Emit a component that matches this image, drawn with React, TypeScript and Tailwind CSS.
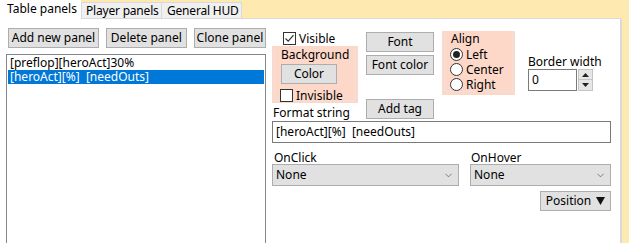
import { ChevronDown } from 'lucide-react';

const font = { fontFamily: '"Noto Sans", "Open Sans", sans-serif' };

function WinButton({ label, className = '' }: { label: string; className?: string }) {
  return (
    <div
      className={`flex items-center justify-center bg-[#e1e1e1] border border-[#adadad] text-[12px] leading-none whitespace-nowrap text-black ${className}`}
    >
      {label}
    </div>
  );
}

function CheckBox({ checked, label }: { checked: boolean; label: string }) {
  return (
    <div className="flex items-center gap-[3px] h-[15px] text-[12px] leading-[15px]">
      <div className="w-[13px] h-[13px] border border-[#333] bg-white flex items-center justify-center">
        {checked && (
          <svg width="11" height="11" viewBox="0 0 11 11">
            <path d="M1.5 5.5 L4.2 8.2 L9.5 2.2" stroke="#333" strokeWidth="1.2" fill="none" />
          </svg>
        )}
      </div>
      <span>{label}</span>
    </div>
  );
}

function Radio({ checked, label }: { checked: boolean; label: string }) {
  return (
    <div className="flex items-center gap-[3px] h-[15px] text-[12px] leading-[15px]">
      <div className="w-[13px] h-[13px] rounded-full border border-[#333] bg-white flex items-center justify-center">
        {checked && <div className="w-[7px] h-[7px] rounded-full bg-[#222]" />}
      </div>
      <span>{label}</span>
    </div>
  );
}

function Select({ className = '' }: { className?: string }) {
  return (
    <div
      className={`h-[22px] flex items-center justify-between pl-[3px] pr-[4px] bg-[#e1e1e1] border border-[#adadad] text-[12px] leading-[20px] ${className}`}
    >
      <span>None</span>
      <ChevronDown className="w-[11px] h-[11px] text-[#555]" strokeWidth={1.5} />
    </div>
  );
}

export default function App() {
  return (
    <div className="w-[629px] h-[243px] overflow-hidden bg-[#fee9b1] text-black" style={font}>
      {/* tabs */}
      <div className="flex h-[19px]">
        <div className="w-[81px] bg-white pl-[7px] pt-[1px] text-[12px] leading-[16px] whitespace-nowrap">Table panels</div>
        <div className="mt-[2px] w-[81px] bg-[#f0f0f0] border border-[#d9d9d9] pl-[4px] text-[12px] tracking-[-0.2px] leading-[15px] whitespace-nowrap">
          Player panels
        </div>
        <div className="mt-[2px] w-[80px] bg-[#f0f0f0] border border-l-0 border-[#d9d9d9] pl-[5px] text-[12px] tracking-[-0.2px] leading-[15px] whitespace-nowrap">
          General HUD
        </div>
        <div className="w-[379px] border-b border-[#d9d9d9]" />
      </div>

      {/* panel */}
      <div className="w-[622px] h-[224px] bg-white border-r-2 border-[#d9d9d9] flex">
        {/* left column */}
        <div className="w-[266px] pl-[6px] pt-[9px] flex flex-col">
          <div className="flex gap-[7px] pl-[2px]">
            <WinButton label="Add new panel" className="w-[92px] h-[20px]" />
            <WinButton label="Delete panel" className="w-[82px] h-[20px]" />
            <WinButton label="Clone panel" className="w-[73px] h-[20px]" />
          </div>
          <div className="mt-[6px] flex-1 border border-[#828790] border-b-0 pt-[1px] px-[1px] text-[12px] leading-[14px]">
            <div className="pl-[2px] h-[14px] whitespace-nowrap">[preflop][heroAct]30%</div>
            <div className="pl-[2px] h-[14px] bg-[#0078d7] text-white whitespace-pre">[heroAct][%]  [needOuts]</div>
          </div>
        </div>

        {/* right column */}
        <div className="ml-[6px] w-[339px] pt-[12px] flex flex-col">
          <div className="flex">
            {/* col A */}
            <div className="w-[86px] flex flex-col">
              <div className="pl-[11px]">
                <CheckBox checked label="Visible" />
              </div>
              <div className="h-[57px] bg-[#fdd8c9] px-[2px] pt-[2px]">
                <div className="h-[53px] border border-[#ece1dc] border-t-0">
                  <div className="pl-[6px] text-[12px] leading-[14px]">Background</div>
                  <WinButton label="Color" className="ml-[6px] mt-[2px] w-[56px] h-[20px]" />
                  <div className="pl-[5px] mt-[4px]">
                    <CheckBox checked={false} label="Invisible" />
                  </div>
                </div>
              </div>
              <div className="pl-[1px] mt-[3px] text-[12px] leading-[14px] whitespace-nowrap">Format string</div>
            </div>
            {/* col B */}
            <div className="ml-[8px] w-[68px] flex flex-col pt-[1px]">
              <WinButton label="Font" className="w-[68px] h-[20px]" />
              <WinButton label="Font color" className="mt-[3px] w-[68px] h-[20px]" />
              <WinButton label="Add tag" className="mt-[24px] w-[68px] h-[20px]" />
            </div>
            {/* col C */}
            <div className="ml-[8px] w-[73px] h-[64px] bg-[#fdd8c9] px-[2px] pt-[1px]">
              <div className="h-[60px] border border-[#ece1dc] border-t-0">
                <div className="pl-[6px] text-[12px] leading-[14px]">Align</div>
                <div className="pl-[5px] mt-[1px] flex flex-col">
                  <Radio checked label="Left" />
                  <Radio checked={false} label="Center" />
                  <Radio checked={false} label="Right" />
                </div>
              </div>
            </div>
            {/* col D */}
            <div className="ml-[13px] pt-[24px] flex flex-col">
              <div className="text-[12px] leading-[13px] whitespace-nowrap">Border width</div>
              <div className="mt-[1px] flex">
                <div className="w-[49px] h-[22px] border border-[#7a7a7a] pl-[3px] text-[12px] leading-[20px]">0</div>
                <div className="ml-[1px] w-[15px] h-[22px] flex flex-col">
                  <div className="h-[11px] bg-[#e6e6e6] border border-[#c4c4c4] flex items-center justify-center">
                    <svg width="7" height="4" viewBox="0 0 7 4">
                      <path d="M0 4 L3.5 0 L7 4 Z" fill="#222" />
                    </svg>
                  </div>
                  <div className="h-[11px] bg-[#e6e6e6] border border-t-0 border-[#c4c4c4] flex items-center justify-center">
                    <svg width="7" height="4" viewBox="0 0 7 4">
                      <path d="M0 0 L3.5 4 L7 0 Z" fill="#222" />
                    </svg>
                  </div>
                </div>
              </div>
            </div>
          </div>

          <div className="mt-[1px] w-[339px] h-[22px] border border-[#7a7a7a] pl-[3px] text-[12px] leading-[20px] whitespace-pre">
            [heroAct][%]  [needOuts]
          </div>

          <div className="mt-[8px] flex">
            <div className="w-[187px] flex flex-col">
              <div className="pl-[2px] text-[12px] leading-[14px]">OnClick</div>
              <Select className="mt-[-1px] w-[187px]" />
            </div>
            <div className="ml-[11px] w-[141px] flex flex-col">
              <div className="pl-[1px] text-[12px] leading-[14px]">OnHover</div>
              <Select className="mt-[-1px] w-[141px]" />
            </div>
          </div>

          <div className="mt-[5px] flex justify-end">
            <div className="w-[71px] h-[20px] bg-[#e1e1e1] border border-[#adadad] flex items-center justify-center gap-[5px] text-[12px] leading-none">
              <span>Position</span>
              <svg width="9" height="8" viewBox="0 0 9 8">
                <path d="M0 0 L9 0 L4.5 8 Z" fill="#111" />
              </svg>
            </div>
          </div>
        </div>
      </div>
    </div>
  );
}
